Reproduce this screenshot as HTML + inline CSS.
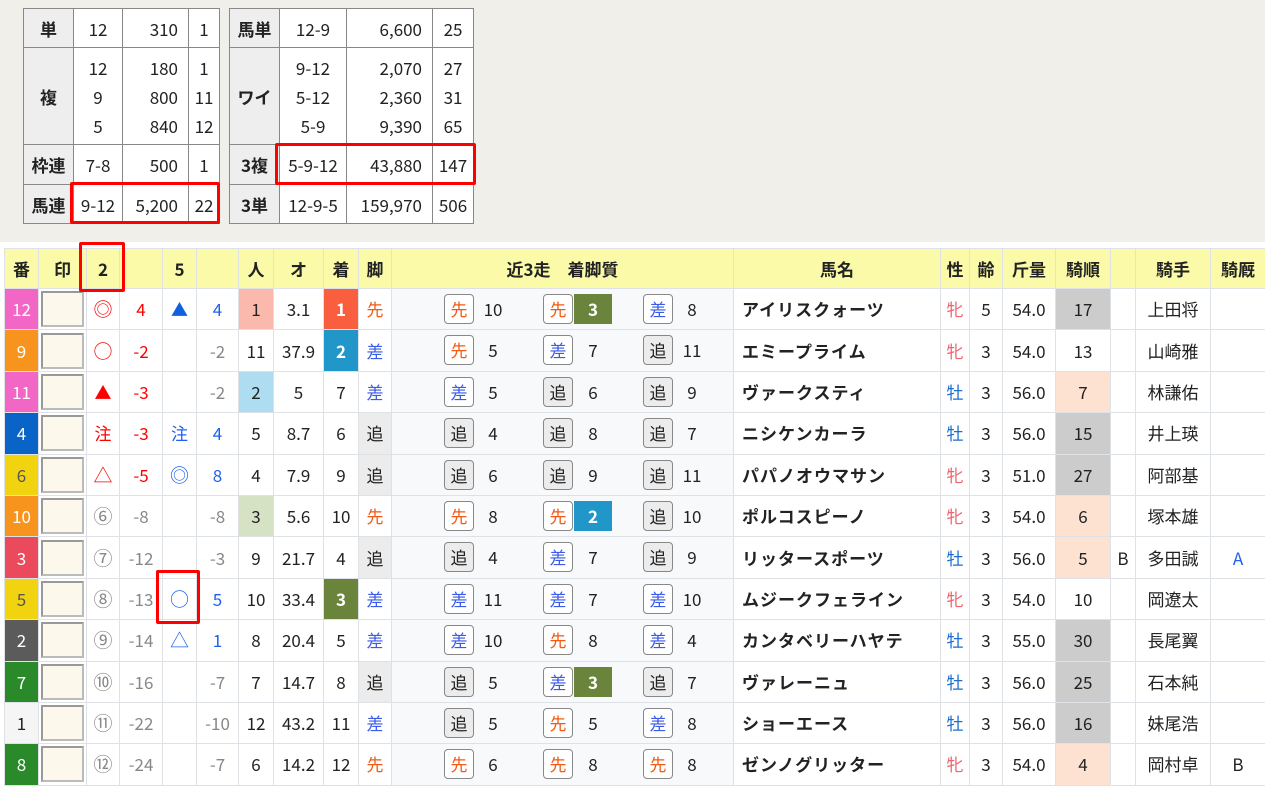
<!DOCTYPE html>
<html><head><meta charset="utf-8"><style>
*{box-sizing:border-box;margin:0;padding:0}
body{width:1265px;height:791px;background:#fff;font-family:"Noto Sans CJK JP","Liberation Sans",sans-serif;font-size:17px;color:#222;position:relative;overflow:hidden;line-height:20px}
.top{position:absolute;left:0;top:0;width:1265px;height:242px;background:#f1efea}
table{border-collapse:collapse}
.pt{position:absolute;top:8px;background:#fff;table-layout:fixed}
.pt td{border:1px solid #888;text-align:center;line-height:29px;height:39px;padding:0}
.pt td.h{background:#eee;font-weight:bold}
.pt td.r{text-align:right;padding-right:10px}
.main{position:absolute;left:4px;top:248px;table-layout:fixed;width:1261px}
.main td,.main th{border:1px solid #dee2e6;text-align:center;height:41.4px;padding:0;white-space:nowrap;overflow:hidden;line-height:20px}
.main th{background:#fafaa8;font-weight:bold;height:40px}
.f{color:#fff}
.in{padding:2px!important}
.in div{border:2px solid #bbb;border-top-color:#999;border-left-color:#999;background:#fdf8ec;height:36px}
.g{color:#888}.rd{color:#f00}.bl{color:#2060f0}
.big{font-size:19px}
.sen{color:#f05a14}.sa{color:#3a5ae8}.oi{background:#ececec}
.rc{background:#f8f9fa;text-align:left!important;position:relative}
.b{position:absolute;top:5px;width:30px;height:30px;border:1px solid #888;border-radius:4px;background:#fff;text-align:center;line-height:28px}
.b.o{background:#ececec}
.n{position:absolute;top:5px;width:38px;height:30px;text-align:center;line-height:30px}
.n.c{color:#fff;font-weight:bold}
.nm{text-align:left!important;padding-left:8px!important;font-weight:bold;letter-spacing:1px}
.hu{color:#f0646e}.bo{color:#1a6ed0}
.gy{background:#ccc}.pc{background:#fde2d2}
.red{position:absolute;border:3px solid #f00;border-radius:2px}
</style></head><body>
<div class="top"></div>
<table class="pt" style="left:23px;width:196px">
<colgroup><col style="width:50px"><col style="width:49px"><col style="width:66px"><col style="width:31px"></colgroup>
<tr><td class="h">単</td><td>12</td><td class="r">310</td><td>1</td></tr>
<tr><td class="h" style="height:97px">複</td><td>12<br>9<br>5</td><td class="r">180<br>800<br>840</td><td>1<br>11<br>12</td></tr>
<tr><td class="h" style="height:40px">枠連</td><td>7-8</td><td class="r">500</td><td>1</td></tr>
<tr><td class="h">馬連</td><td>9-12</td><td class="r">5,200</td><td>22</td></tr>
</table>
<table class="pt" style="left:229px;width:244px">
<colgroup><col style="width:50px"><col style="width:67px"><col style="width:86px"><col style="width:41px"></colgroup>
<tr><td class="h">馬単</td><td>12-9</td><td class="r">6,600</td><td>25</td></tr>
<tr><td class="h" style="height:97px">ワイ</td><td>9-12<br>5-12<br>5-9</td><td class="r">2,070<br>2,360<br>9,390</td><td>27<br>31<br>65</td></tr>
<tr><td class="h" style="height:40px">3複</td><td>5-9-12</td><td class="r">43,880</td><td>147</td></tr>
<tr><td class="h">3単</td><td>12-9-5</td><td class="r">159,970</td><td>506</td></tr>
</table>

<table class="main">
<colgroup><col style="width:34px"><col style="width:48px"><col style="width:33px"><col style="width:43px"><col style="width:34px"><col style="width:42px"><col style="width:35px"><col style="width:50px"><col style="width:35px"><col style="width:33px"><col style="width:342px"><col style="width:207px"><col style="width:29px"><col style="width:33px"><col style="width:53px"><col style="width:55px"><col style="width:25px"><col style="width:75px"><col style="width:55px"></colgroup>
<tr><th>番</th><th>印</th><th>2</th><th></th><th>5</th><th></th><th>人</th><th>オ</th><th>着</th><th>脚</th><th>近3走　着脚質</th><th>馬名</th><th>性</th><th>齢</th><th>斤量</th><th>騎順</th><th></th><th>騎手</th><th>騎厩</th></tr>

<tr><td class="f" style="background:#f266c6">12</td><td class="in"><div></div></td><td class="rd big">◎</td><td class="rd">4</td><td style="color:#1060e0">▲</td><td class="bl">4</td><td style="background:#fbb9ae">1</td><td>3.1</td><td class="f" style="background:#f95e3e;font-weight:bold">1</td><td class="sen">先</td>
<td class="rc"><span class="b sen" style="left:52px">先</span><span class="n" style="left:82px">10</span><span class="b sen" style="left:151px">先</span><span class="n c" style="left:182px;background:#6a843c">3</span><span class="b sa" style="left:251px">差</span><span class="n" style="left:281px">8</span></td>
<td class="nm">アイリスクォーツ</td><td class="hu">牝</td><td>5</td><td>54.0</td><td class="gy">17</td><td></td><td>上田将</td><td></td></tr>

<tr><td class="f" style="background:#f7941d">9</td><td class="in"><div></div></td><td class="rd big">○</td><td class="rd">-2</td><td></td><td class="g">-2</td><td>11</td><td>37.9</td><td class="f" style="background:#2196c8;font-weight:bold">2</td><td class="sa">差</td>
<td class="rc"><span class="b sen" style="left:52px">先</span><span class="n" style="left:82px">5</span><span class="b sa" style="left:151px">差</span><span class="n" style="left:182px">7</span><span class="b o" style="left:251px">追</span><span class="n" style="left:281px">11</span></td>
<td class="nm">エミープライム</td><td class="hu">牝</td><td>3</td><td>54.0</td><td>13</td><td></td><td>山崎雅</td><td></td></tr>

<tr><td class="f" style="background:#f266c6">11</td><td class="in"><div></div></td><td class="rd">▲</td><td class="rd">-3</td><td></td><td class="g">-2</td><td style="background:#aedcf0">2</td><td>5</td><td>7</td><td class="sa">差</td>
<td class="rc"><span class="b sa" style="left:52px">差</span><span class="n" style="left:82px">5</span><span class="b o" style="left:151px">追</span><span class="n" style="left:182px">6</span><span class="b o" style="left:251px">追</span><span class="n" style="left:281px">9</span></td>
<td class="nm">ヴァークスティ</td><td class="bo">牡</td><td>3</td><td>56.0</td><td class="pc">7</td><td></td><td>林謙佑</td><td></td></tr>

<tr><td class="f" style="background:#0a64c8">4</td><td class="in"><div></div></td><td class="rd">注</td><td class="rd">-3</td><td class="bl">注</td><td class="bl">4</td><td>5</td><td>8.7</td><td>6</td><td class="oi">追</td>
<td class="rc"><span class="b o" style="left:52px">追</span><span class="n" style="left:82px">4</span><span class="b o" style="left:151px">追</span><span class="n" style="left:182px">8</span><span class="b o" style="left:251px">追</span><span class="n" style="left:281px">7</span></td>
<td class="nm">ニシケンカーラ</td><td class="bo">牡</td><td>3</td><td>56.0</td><td class="gy">15</td><td></td><td>井上瑛</td><td></td></tr>

<tr><td style="background:#f2d30f;color:#555">6</td><td class="in"><div></div></td><td class="rd big">△</td><td class="rd">-5</td><td class="bl big">◎</td><td class="bl">8</td><td>4</td><td>7.9</td><td>9</td><td class="oi">追</td>
<td class="rc"><span class="b o" style="left:52px">追</span><span class="n" style="left:82px">6</span><span class="b o" style="left:151px">追</span><span class="n" style="left:182px">9</span><span class="b o" style="left:251px">追</span><span class="n" style="left:281px">11</span></td>
<td class="nm">パパノオウマサン</td><td class="hu">牝</td><td>3</td><td>51.0</td><td class="gy">27</td><td></td><td>阿部基</td><td></td></tr>

<tr><td class="f" style="background:#f7941d">10</td><td class="in"><div></div></td><td class="g big">⑥</td><td class="g">-8</td><td></td><td class="g">-8</td><td style="background:#d5e2c4">3</td><td>5.6</td><td>10</td><td class="sen">先</td>
<td class="rc"><span class="b sen" style="left:52px">先</span><span class="n" style="left:82px">8</span><span class="b sen" style="left:151px">先</span><span class="n c" style="left:182px;background:#2196c8">2</span><span class="b o" style="left:251px">追</span><span class="n" style="left:281px">10</span></td>
<td class="nm">ポルコスピーノ</td><td class="hu">牝</td><td>3</td><td>54.0</td><td class="pc">6</td><td></td><td>塚本雄</td><td></td></tr>

<tr><td class="f" style="background:#ea4a5c">3</td><td class="in"><div></div></td><td class="g big">⑦</td><td class="g">-12</td><td></td><td class="g">-3</td><td>9</td><td>21.7</td><td>4</td><td class="oi">追</td>
<td class="rc"><span class="b o" style="left:52px">追</span><span class="n" style="left:82px">4</span><span class="b sa" style="left:151px">差</span><span class="n" style="left:182px">7</span><span class="b o" style="left:251px">追</span><span class="n" style="left:281px">9</span></td>
<td class="nm">リッタースポーツ</td><td class="bo">牡</td><td>3</td><td>56.0</td><td class="pc">5</td><td>B</td><td>多田誠</td><td class="bl">A</td></tr>

<tr><td style="background:#f2d30f;color:#555">5</td><td class="in"><div></div></td><td class="g big">⑧</td><td class="g">-13</td><td class="bl big">○</td><td class="bl">5</td><td>10</td><td>33.4</td><td class="f" style="background:#6a843c;font-weight:bold">3</td><td class="sa">差</td>
<td class="rc"><span class="b sa" style="left:52px">差</span><span class="n" style="left:82px">11</span><span class="b sa" style="left:151px">差</span><span class="n" style="left:182px">7</span><span class="b sa" style="left:251px">差</span><span class="n" style="left:281px">10</span></td>
<td class="nm">ムジークフェライン</td><td class="hu">牝</td><td>3</td><td>54.0</td><td>10</td><td></td><td>岡遼太</td><td></td></tr>

<tr><td class="f" style="background:#5b5b5b">2</td><td class="in"><div></div></td><td class="g big">⑨</td><td class="g">-14</td><td class="bl big">△</td><td class="bl">1</td><td>8</td><td>20.4</td><td>5</td><td class="sa">差</td>
<td class="rc"><span class="b sa" style="left:52px">差</span><span class="n" style="left:82px">10</span><span class="b sen" style="left:151px">先</span><span class="n" style="left:182px">8</span><span class="b sa" style="left:251px">差</span><span class="n" style="left:281px">4</span></td>
<td class="nm">カンタベリーハヤテ</td><td class="bo">牡</td><td>3</td><td>55.0</td><td class="gy">30</td><td></td><td>長尾翼</td><td></td></tr>

<tr><td class="f" style="background:#2a8a2a">7</td><td class="in"><div></div></td><td class="g big">⑩</td><td class="g">-16</td><td></td><td class="g">-7</td><td>7</td><td>14.7</td><td>8</td><td class="oi">追</td>
<td class="rc"><span class="b o" style="left:52px">追</span><span class="n" style="left:82px">5</span><span class="b sa" style="left:151px">差</span><span class="n c" style="left:182px;background:#6a843c">3</span><span class="b o" style="left:251px">追</span><span class="n" style="left:281px">7</span></td>
<td class="nm">ヴァレーニュ</td><td class="bo">牡</td><td>3</td><td>56.0</td><td class="gy">25</td><td></td><td>石本純</td><td></td></tr>

<tr><td style="background:#f5f5f5">1</td><td class="in"><div></div></td><td class="g big">⑪</td><td class="g">-22</td><td></td><td class="g">-10</td><td>12</td><td>43.2</td><td>11</td><td class="sa">差</td>
<td class="rc"><span class="b o" style="left:52px">追</span><span class="n" style="left:82px">5</span><span class="b sen" style="left:151px">先</span><span class="n" style="left:182px">5</span><span class="b sa" style="left:251px">差</span><span class="n" style="left:281px">8</span></td>
<td class="nm">ショーエース</td><td class="bo">牡</td><td>3</td><td>56.0</td><td class="gy">16</td><td></td><td>妹尾浩</td><td></td></tr>

<tr><td class="f" style="background:#2a8a2a">8</td><td class="in"><div></div></td><td class="g big">⑫</td><td class="g">-24</td><td></td><td class="g">-7</td><td>6</td><td>14.2</td><td>12</td><td class="sen">先</td>
<td class="rc"><span class="b sen" style="left:52px">先</span><span class="n" style="left:82px">6</span><span class="b sen" style="left:151px">先</span><span class="n" style="left:182px">8</span><span class="b sen" style="left:251px">先</span><span class="n" style="left:281px">8</span></td>
<td class="nm">ゼンノグリッター</td><td class="hu">牝</td><td>3</td><td>54.0</td><td class="pc">4</td><td></td><td>岡村卓</td><td>B</td></tr>
</table>

<div class="red" style="left:70px;top:182px;width:150px;height:42px"></div>
<div class="red" style="left:275px;top:143px;width:201px;height:42px"></div>
<div class="red" style="left:79px;top:242px;width:46px;height:50px"></div>
<div class="red" style="left:156px;top:570px;width:44px;height:54px"></div>
</body></html>
